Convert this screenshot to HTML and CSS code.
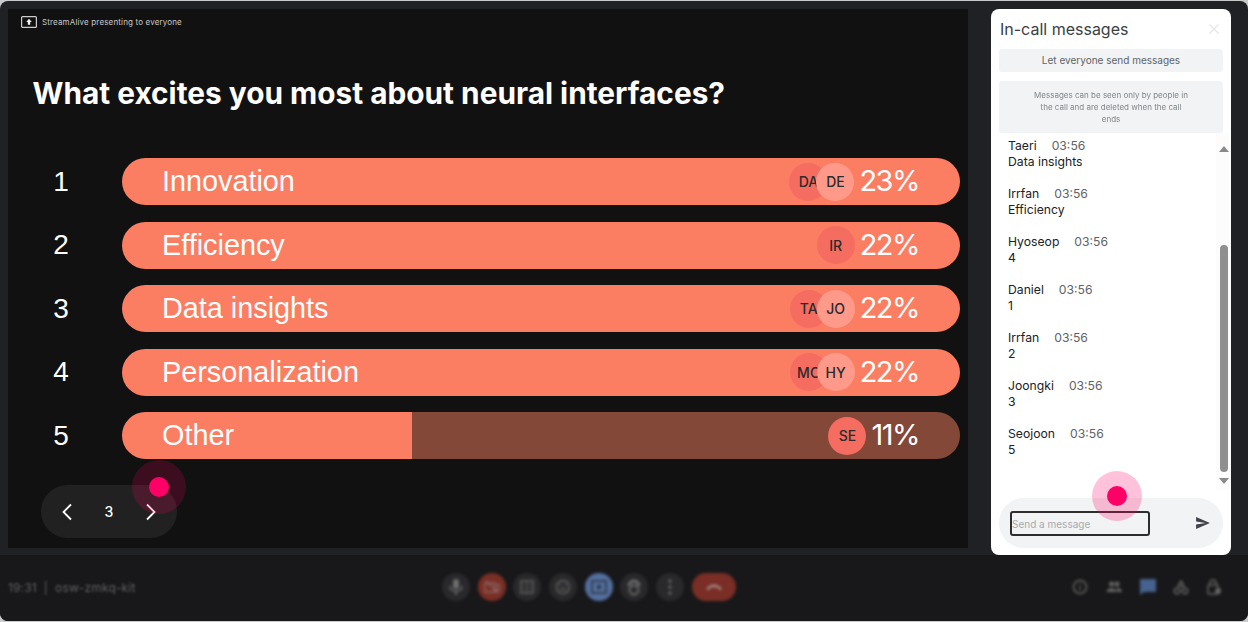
FILE: index.html
```html
<!DOCTYPE html>
<html lang="en">
<head>
    <meta charset="UTF-8">
    <meta name="viewport" content="width=device-width, initial-scale=1.0">
    <title>In-call presentation</title>
    <link rel="stylesheet" href="styles.css">
</head>
<body>
    <div class="frame">
        <div class="stage">
            <!-- Shared slide -->
            <main class="slide">
                <div class="presenting">
                    <svg class="present-icon" width="16" height="12" viewBox="0 0 16 12"><rect x="0.6" y="0.6" width="14.8" height="10.8" rx="1" fill="none" stroke="#ccc" stroke-width="1.200"/><path d="M8 2.800l2.800 3.200H9.200v2.800H6.800V6H5.200z" fill="#eee"/></svg>
                    <span>StreamAlive presenting to everyone</span>
                </div>
                <h1>What excites you most about neural interfaces?</h1>
                <div class="poll">
                    <div class="row">
                        <div class="rank">1</div>
                        <div class="bar">
                            <span class="label">Innovation</span>
                            <div class="avatars"><span class="avatar">DA</span><span class="avatar front">DE</span></div>
                            <span class="pct">23%</span>
                        </div>
                    </div>
                    <div class="row">
                        <div class="rank">2</div>
                        <div class="bar">
                            <span class="label">Efficiency</span>
                            <div class="avatars"><span class="avatar">IR</span></div>
                            <span class="pct">22%</span>
                        </div>
                    </div>
                    <div class="row">
                        <div class="rank">3</div>
                        <div class="bar">
                            <span class="label">Data insights</span>
                            <div class="avatars"><span class="avatar">TA</span><span class="avatar front">JO</span></div>
                            <span class="pct">22%</span>
                        </div>
                    </div>
                    <div class="row">
                        <div class="rank">4</div>
                        <div class="bar">
                            <span class="label">Personalization</span>
                            <div class="avatars"><span class="avatar">MC</span><span class="avatar front">HY</span></div>
                            <span class="pct">22%</span>
                        </div>
                    </div>
                    <div class="row">
                        <div class="rank">5</div>
                        <div class="bar partial">
                            <span class="label">Other</span>
                            <div class="avatars"><span class="avatar">SE</span></div>
                            <span class="pct">11%</span>
                        </div>
                    </div>
                </div>
                <div class="pager">
                    <svg width="12" height="18" viewBox="0 0 12 18"><path d="M10 1.5L2.5 9l7.5 7.5" fill="none" stroke="#fff" stroke-width="1.8"/></svg>
                    <span class="page-num">3</span>
                    <svg width="12" height="18" viewBox="0 0 12 18"><path d="M2 1.5L9.500 9 2 16.500" fill="none" stroke="#fff" stroke-width="1.8"/></svg>
                </div>
                <div class="touch touch-dark"></div>
            </main>

            <!-- Chat panel -->
            <aside class="chat">
                <div class="chat-head">
                    <h2>In-call messages</h2>
                    <svg width="10" height="10" viewBox="0 0 10 10"><path d="M0.500 0.500l9 9M9.500 0.500l-9 9" stroke="#e4e5e7" stroke-width="1.100"/></svg>
                </div>
                <div class="let-everyone">Let everyone send messages</div>
                <div class="notice">Messages can be seen only by people in the call and are deleted when the call ends</div>
                <div class="chat-body">
                    <div class="messages">
                        <div class="msg"><div><b>Taeri</b><time>03:56</time></div><p>Data insights</p></div>
                        <div class="msg"><div><b>Irrfan</b><time>03:56</time></div><p>Efficiency</p></div>
                        <div class="msg"><div><b>Hyoseop</b><time>03:56</time></div><p>4</p></div>
                        <div class="msg"><div><b>Daniel</b><time>03:56</time></div><p>1</p></div>
                        <div class="msg"><div><b>Irrfan</b><time>03:56</time></div><p>2</p></div>
                        <div class="msg"><div><b>Joongki</b><time>03:56</time></div><p>3</p></div>
                        <div class="msg"><div><b>Seojoon</b><time>03:56</time></div><p>5</p></div>
                    </div>
                    <div class="scrollbar">
                        <span class="arrow up"></span>
                        <span class="track"><span class="thumb"></span></span>
                        <span class="arrow down"></span>
                    </div>
                </div>
                <div class="composer">
                    <div class="input">Send a message</div>
                    <svg width="14" height="12" viewBox="0 0 15 13"><path d="M0 13l15-6.500L0 0v5l10.500 1.500L0 8z" fill="#40444a"/></svg>
                </div>
                <div class="touch touch-light"></div>
            </aside>
        </div>

        <footer class="toolbar">
            <div class="meeting">19:31 &nbsp;|&nbsp; osw-zmkq-kit</div>
            <div class="controls">
                <span class="ctl"><svg width="16" height="18" viewBox="0 0 16 18"><rect x="5" y="1" width="6" height="10" rx="3" fill="#6e6e6e"/><path d="M2 8c0 7 12 7 12 0M8 13v4" fill="none" stroke="#6e6e6e" stroke-width="1.600"/></svg></span>
                <span class="ctl red"><svg width="16" height="14" viewBox="0 0 16 14"><path d="M1 3h10v9H1zM11 6l4-2v7l-4-2M2 1l12 12" fill="none" stroke="#8a6a66" stroke-width="1.300"/></svg></span>
                <span class="ctl"><svg width="14" height="14" viewBox="0 0 14 14"><rect x="1" y="1" width="12" height="12" fill="none" stroke="#626262" stroke-width="1.500"/><path d="M7 1v12M3 5h2M3 9h2M9 5h2M9 9h2" stroke="#626262"/></svg></span>
                <span class="ctl"><svg width="16" height="16" viewBox="0 0 16 16"><circle cx="8" cy="8" r="6.500" fill="none" stroke="#626262" stroke-width="1.500"/><path d="M4.500 11a4 4 0 0 1 7 0" fill="#626262"/><circle cx="5.500" cy="6" r="1" fill="#626262"/><circle cx="10.500" cy="6" r="1" fill="#626262"/></svg></span>
                <span class="ctl blue"><svg width="16" height="14" viewBox="0 0 16 14"><rect x="1" y="1" width="14" height="12" fill="none" stroke="#2c3444" stroke-width="1.600"/><rect x="6" y="5" width="4" height="4" fill="#2c3444"/></svg></span>
                <span class="ctl"><svg width="16" height="18" viewBox="0 0 16 18"><path d="M3 8a5 5 0 0 1 10 0" fill="none" stroke="#6e6e6e" stroke-width="3"/><circle cx="8" cy="12" r="4.500" fill="none" stroke="#6e6e6e" stroke-width="1.800"/></svg></span>
                <span class="ctl"><svg width="4" height="16" viewBox="0 0 4 16"><circle cx="2" cy="2" r="1.500" fill="#777"/><circle cx="2" cy="8" r="1.500" fill="#777"/><circle cx="2" cy="14" r="1.500" fill="#777"/></svg></span>
                <span class="ctl hangup"><svg width="18" height="8" viewBox="0 0 18 8"><path d="M1 6c4-6 12-6 16 0l-3 1-1-2c-2-1-6-1-8 0L4 7z" fill="#a08a86"/></svg></span>
            </div>
            <div class="side-icons">
                <svg width="16" height="16" viewBox="0 0 16 16"><circle cx="8" cy="8" r="6.500" fill="none" stroke="#666" stroke-width="1.500"/><path d="M8 7v4M8 4.500v1.200" stroke="#666" stroke-width="1.500"/></svg>
                <svg width="16" height="12" viewBox="0 0 16 12"><circle cx="5.500" cy="3" r="2.500" fill="#666"/><circle cx="11" cy="3" r="2.500" fill="#666"/><path d="M0.500 11c0-5 10-5 10 0zM11 11c0-2 0-3-1-4 3-.5 6 1 6 4z" fill="#666"/></svg>
                <svg width="16" height="16" viewBox="0 0 16 16"><path d="M0 0h16v13H4l-4 3z" fill="#46628f"/></svg>
                <svg width="16" height="15" viewBox="0 0 16 15"><path d="M8 1l3 5H5z" fill="none" stroke="#666" stroke-width="1.500"/><circle cx="4" cy="11" r="2.700" fill="none" stroke="#666" stroke-width="1.500"/><circle cx="12" cy="11" r="2.700" fill="none" stroke="#666" stroke-width="1.500"/></svg>
                <svg width="14" height="16" viewBox="0 0 14 16"><rect x="1" y="6" width="10" height="9" rx="1" fill="none" stroke="#666" stroke-width="1.500"/><path d="M3 6V4a3 3 0 0 1 6 0v2" fill="none" stroke="#666" stroke-width="1.500"/><circle cx="11" cy="12" r="3" fill="#666"/></svg>
            </div>
        </footer>
    </div>
</body>
</html>
```

FILE: styles.css
```css
* {
    box-sizing: border-box;
}
html, body {
    margin: 0;
    height: 100%;
    background: #c9cacc;
}
body {
    padding-top: 1px;
    font-family: "Inter", sans-serif;
    overflow: hidden;
}
.frame {
    display: flex;
    flex-direction: column;
    width: 1248px;
    height: 620px;
    background: #202124;
    border-radius: 8px;
    overflow: hidden;
}
.stage {
    display: flex;
    align-items: flex-start;
    gap: 23px;
    height: 554px;
    padding: 8px 17px 0 8px;
}

/* slide */
.slide {
    position: relative;
    width: 960px;
    height: 539px;
    background: #111;
}
.presenting {
    display: flex;
    align-items: center;
    gap: 5px;
    padding: 7px 0 0 13px;
    font-size: 8px;
    letter-spacing: 0.15px;
    color: #c8c8c8;
}
.present-icon {
    display: block;
}
h1 {
    margin: 47px 0 0 24.500px;
    font-size: 29.800px;
    line-height: 36px;
    font-weight: 700;
    color: #fff;
    white-space: nowrap;
}
.poll {
    display: flex;
    flex-direction: column;
    gap: 16.500px;
    margin-top: 47px;
}
.row {
    display: flex;
    align-items: center;
}
.rank {
    width: 114px;
    padding-right: 8px;
    text-align: center;
    font-family: "Liberation Sans", sans-serif;
    font-size: 28px;
    color: #fff;
}
.bar {
    display: flex;
    align-items: center;
    width: 838px;
    height: 47px;
    padding: 0 40px;
    border-radius: 24px;
    background: #fb7e62;
    color: #fff;
}
.bar.partial {
    background: linear-gradient(to right, #fb7e62 0, #fb7e62 290px, #844838 290px);
}
.label {
    flex: 1;
    font-family: "Liberation Sans", sans-serif;
    font-size: 28.800px;
}
.avatars {
    display: flex;
    margin-right: 5px;
}
.avatar {
    display: flex;
    align-items: center;
    justify-content: center;
    width: 38px;
    height: 38px;
    border-radius: 50%;
    background: #f56c61;
    color: #2b2b2b;
    font-size: 14px;
    font-weight: 500;
}
.avatar.front {
    margin-left: -11px;
    background: #ff9a8b;
}
.pct {
    margin: -2px 1px 0 0;
    font-size: 29px;
    letter-spacing: -1.500px;
}
.pager {
    display: flex;
    align-items: center;
    justify-content: space-between;
    width: 136px;
    height: 53px;
    margin: 26px 0 0 33px;
    padding: 0 20px;
    border-radius: 27px;
    background: #212121;
}
.page-num {
    font-size: 14px;
    font-weight: 500;
    color: #fff;
}

/* touch markers from the recording */
.touch {
    position: absolute;
    width: 50px;
    height: 50px;
    border-radius: 50%;
    background: rgba(255, 0, 102, 0.24);
}
.touch::after {
    content: "";
    position: absolute;
    top: 15px;
    left: 15px;
    width: 20px;
    height: 20px;
    border-radius: 50%;
    background: #ff0066;
}
.touch-dark {
    top: 451px;
    left: 124px;
    width: 54px;
    height: 54px;
    background: rgba(255, 0, 102, 0.18);
}
.touch-dark::after {
    top: 17px;
    left: 17px;
}
.touch-light {
    top: 462px;
    left: 101px;
}

/* chat */
.chat {
    position: relative;
    display: flex;
    flex-direction: column;
    width: 240px;
    height: 546px;
    padding: 0 8px 7px;
    background: #fff;
    border-radius: 8px;
}
.chat-head {
    display: flex;
    align-items: center;
    justify-content: space-between;
    flex: none;
    height: 40px;
    padding: 0 4px 0 1px;
}
h2 {
    margin: 0;
    font-size: 16px;
    font-weight: 400;
    color: #3c4043;
}
.let-everyone {
    flex: none;
    height: 23px;
    line-height: 23px;
    text-align: center;
    font-size: 10px;
    color: #5f6368;
    background: #f1f3f4;
    border-radius: 3px;
}
.notice {
    flex: none;
    height: 52px;
    margin-top: 9px;
    padding: 8px 32px 0;
    text-align: center;
    font-size: 8px;
    line-height: 12px;
    color: #80868b;
    background: #f1f3f4;
    border-radius: 3px;
    filter: blur(0.3px);
}
.chat-body {
    display: flex;
    flex: none;
    height: 357px;
}
.messages {
    flex: 1;
    padding: 5px 0 0 9px;
}
.msg {
    height: 48px;
    font-size: 12.200px;
    line-height: 16px;
    color: #202124;
}
.msg b {
    font-weight: 400;
}
.msg time {
    margin-left: 15px;
    color: #5f6368;
}
.msg p {
    margin: 0;
}
.scrollbar {
    display: flex;
    flex-direction: column;
    align-items: center;
    width: 15px;
    margin-right: -8px;
    padding: 13px 0 6px;
    background: #fcfcfc;
}
.arrow {
    width: 0;
    height: 0;
    border-left: 5px solid transparent;
    border-right: 5px solid transparent;
}
.arrow.up {
    border-bottom: 6px solid #8a8a8a;
}
.arrow.down {
    border-top: 6px solid #8a8a8a;
}
.track {
    display: block;
    flex: 1;
    padding-top: 93px;
}
.thumb {
    display: block;
    width: 8px;
    height: 227px;
    border-radius: 4px;
    background: #8f8f8f;
}
.composer {
    display: flex;
    align-items: center;
    justify-content: space-between;
    flex: none;
    height: 50px;
    margin-top: 8px;
    padding: 0 13px 0 11px;
    border-radius: 25px;
    background: #f1f3f4;
}
.input {
    width: 140px;
    height: 25px;
    line-height: 23px;
    font-size: 10px;
    color: #a8abae;
    border: 2px solid #2e2e2e;
    border-radius: 3px;
}

/* bottom toolbar */
.toolbar {
    position: relative;
    display: flex;
    align-items: center;
    flex: 1;
    padding-bottom: 2px;
    background: #18181a;
}
.meeting, .controls, .side-icons {
    filter: blur(1.400px);
}
.meeting {
    margin-left: 8px;
    font-size: 12px;
    letter-spacing: 0.15px;
    color: #606062;
    filter: blur(1px);
}
.controls {
    position: absolute;
    left: 442px;
    display: flex;
    gap: 7.700px;
}
.ctl {
    display: flex;
    align-items: center;
    justify-content: center;
    width: 28px;
    height: 28px;
    border-radius: 50%;
    background: #29292b;
}
.ctl.red {
    background: #7a2e25;
}
.ctl.blue {
    background: #536f9e;
}
.ctl.hangup {
    width: 44px;
    border-radius: 14px;
    background: #7a2e25;
}
.side-icons {
    position: absolute;
    right: 27px;
    display: flex;
    align-items: center;
    gap: 17.700px;
}
```
